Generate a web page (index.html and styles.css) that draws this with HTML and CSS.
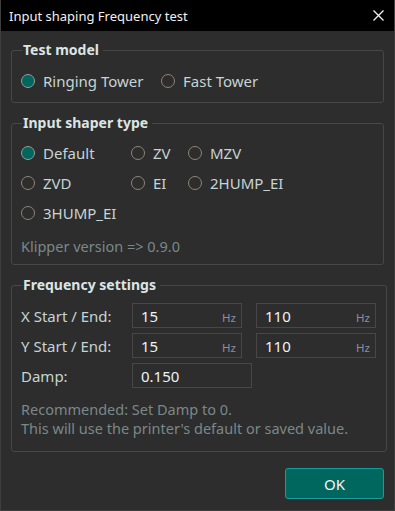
FILE: index.html
```html
<!DOCTYPE html>
<html lang="en">
<head>
  <meta charset="UTF-8" />
  <title>Input shaping Frequency test</title>
  <link rel="stylesheet" href="styles.css">
</head>
<body>
  <div class="window">
    <div class="titlebar">
      <span class="title">Input shaping Frequency test</span>
      <svg class="close" width="11" height="11" viewBox="0 0 11 11">
        <path d="M0.5 0.5L10.5 10.5M10.5 0.5L0.5 10.5" stroke="#f2f2f2" stroke-width="1.3" fill="none" />
      </svg>
    </div>

    <div class="content">
      <fieldset class="group">
        <legend>Test model</legend>
        <div class="radio-row">
          <label class="radio checked w-ringing"><span class="dot"></span>Ringing Tower</label>
          <label class="radio"><span class="dot"></span>Fast Tower</label>
        </div>
      </fieldset>

      <fieldset class="group">
        <legend>Input shaper type</legend>
        <div class="radio-grid">
          <label class="radio checked"><span class="dot"></span>Default</label>
          <label class="radio"><span class="dot"></span>ZV</label>
          <label class="radio"><span class="dot"></span>MZV</label>
          <label class="radio"><span class="dot"></span>ZVD</label>
          <label class="radio"><span class="dot"></span>EI</label>
          <label class="radio"><span class="dot"></span>2HUMP_EI</label>
          <label class="radio"><span class="dot"></span>3HUMP_EI</label>
        </div>
        <div class="hint">Klipper version =&gt; 0.9.0</div>
      </fieldset>

      <fieldset class="group">
        <legend>Frequency settings</legend>
        <div class="field-row">
          <span class="field-label">X Start / End:</span>
          <div class="input"><span>15</span><span class="unit">Hz</span></div>
          <div class="input wide"><span>110</span><span class="unit">Hz</span></div>
        </div>
        <div class="field-row">
          <span class="field-label">Y Start / End:</span>
          <div class="input"><span>15</span><span class="unit">Hz</span></div>
          <div class="input wide"><span>110</span><span class="unit">Hz</span></div>
        </div>
        <div class="field-row">
          <span class="field-label">Damp:</span>
          <div class="input damp"><span>0.150</span></div>
        </div>
        <p class="note">Recommended: Set Damp to 0.<br>This will use the printer's default or saved value.</p>
      </fieldset>

      <div class="actions">
        <button class="ok">OK</button>
      </div>
    </div>
  </div>
</body>
</html>
```

FILE: styles.css
```css
body {
  margin: 0;
  font-family: "Noto Sans", "Open Sans", sans-serif;
  background: #2d2d2d;
}
.window {
  width: 395px;
  height: 511px;
  box-sizing: border-box;
  border: 1px solid #3e3e3e;
  border-top: none;
  background: #2d2d2d;
}
.titlebar {
  height: 31px;
  background: #000;
  display: flex;
  align-items: center;
  justify-content: space-between;
  padding: 0 10px 0 8px;
}
.title {
  color: #f0f0f0;
  font-size: 13px;
}
.content {
  padding: 9px 10px 0 10px;
}
.group {
  margin: 0 0 10px 0;
  border: 1px solid #474747;
  border-radius: 3px;
  padding: 0 10px 0 9px;
}
.group legend {
  margin-left: 1px;
  padding: 0 4px 0 1px;
  font-size: 14px;
  font-weight: bold;
  line-height: 20px;
  color: #dce4e4;
}
.radio-row {
  display: flex;
  height: 28px;
  align-items: center;
  margin-top: 7px;
  margin-bottom: 7px;
}
.radio {
  display: flex;
  align-items: center;
  gap: 8px;
  font-size: 15px;
  color: #c6d4d4;
  white-space: nowrap;
}
.w-ringing {
  width: 140px;
}
.dot {
  width: 12px;
  height: 12px;
  border: 1px solid #8d8577;
  border-radius: 50%;
  box-sizing: content-box;
}
.radio.checked .dot {
  background: #00675f;
  border-color: #9a9a94;
}
.radio-grid {
  display: grid;
  grid-template-columns: 110px 57px auto;
  grid-auto-rows: 30px;
  align-items: center;
  margin-top: 5px;
}
.hint {
  font-size: 14.5px;
  color: #7a8888;
  line-height: 20px;
  margin-top: 8px;
  margin-bottom: 8px;
}
.field-row {
  display: flex;
  align-items: center;
  gap: 14px;
  height: 25px;
  margin-bottom: 5px;
}
.field-row:first-of-type {
  margin-top: 8px;
}
.field-label {
  width: 97px;
  font-size: 15px;
  color: #c6d4d4;
}
.input {
  width: 110px;
  height: 25px;
  box-sizing: border-box;
  border: 1px solid #474747;
  display: flex;
  align-items: center;
  justify-content: space-between;
  padding: 0 5px 0 8px;
  font-size: 15px;
  color: #eef3f3;
}
.input.wide {
  width: 120px;
}
.input.damp {
  width: 120px;
}
.unit {
  font-size: 11.5px;
  color: #8a8cab;
  margin-top: 4px;
}
.note {
  margin: 12px 0 13px 0;
  font-size: 14.5px;
  line-height: 19px;
  color: #7a8888;
}
.actions {
  display: flex;
  justify-content: flex-end;
  padding-top: 6px;
}
.ok {
  width: 99px;
  height: 31px;
  background: #00675f;
  border: 1px solid #1a9b9b;
  border-radius: 3px;
  color: #f4f4f4;
  font-family: inherit;
  font-size: 15px;
}
```
